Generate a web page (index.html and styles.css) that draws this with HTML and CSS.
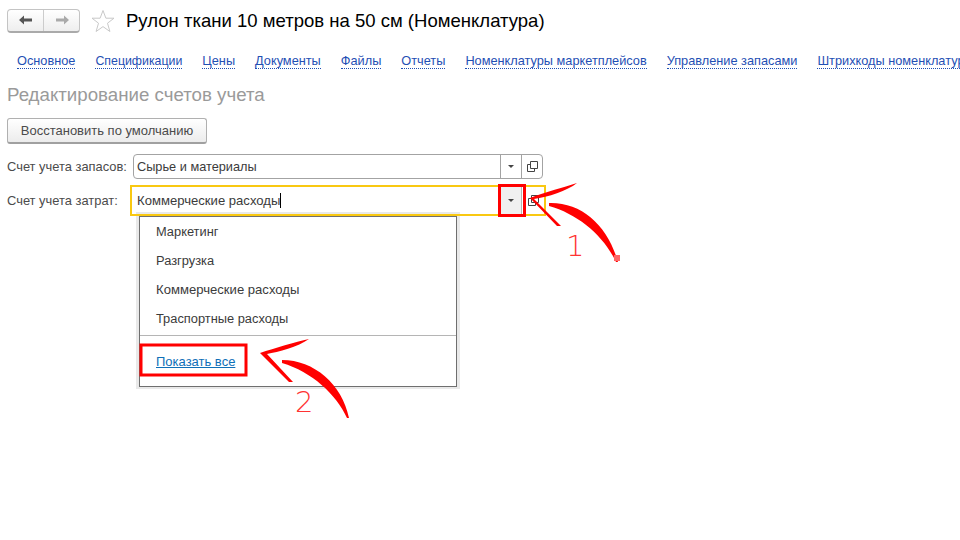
FILE: index.html
```html
<!DOCTYPE html>
<html lang="ru">
<head>
<meta charset="utf-8">
<title>Рулон ткани</title>
<link rel="stylesheet" href="styles.css">
</head>
<body>
<div class="page">
  <header class="head">
    <div class="navbtns">
      <span class="navbtn"><svg width="16" height="12" viewBox="0 0 16 12"><path d="M1 6 L6 1.5 V4.6 H14 V7.4 H6 V10.5 Z" fill="#555"/></svg></span>
      <span class="navbtn"><svg width="16" height="12" viewBox="0 0 16 12"><path d="M15 6 L10 1.5 V4.6 H2 V7.4 H10 V10.5 Z" fill="#aaa"/></svg></span>
    </div>
    <svg class="star" width="24" height="24" viewBox="0 0 24 24"><path d="M12 1.5 L14.9 9.2 H23 L16.5 14.2 L18.9 22.5 L12 17.6 L5.1 22.5 L7.5 14.2 L1 9.2 H9.1 Z" fill="none" stroke="#c9c9c9"/></svg>
    <h1 class="title">Рулон ткани 10 метров на 50 см (Номенклатура)</h1>
  </header>
  <nav class="tabs">
    <a class="tab">Основное</a>
    <a class="tab tab-tight">Спецификации</a>
    <a class="tab">Цены</a>
    <a class="tab">Документы</a>
    <a class="tab">Файлы</a>
    <a class="tab">Отчеты</a>
    <a class="tab">Номенклатуры маркетплейсов</a>
    <a class="tab">Управление запасами</a>
    <a class="tab">Штрихкоды номенклатуры</a>
  </nav>
  <h2 class="subtitle">Редактирование счетов учета</h2>
  <button class="reset">Восстановить по умолчанию</button>
  <div class="row row-first">
    <label class="lbl">Счет учета запасов:</label>
    <div class="field">
      <span class="value">Сырье и материалы</span>
      <span class="cell"><i class="caret"></i></span>
      <span class="cell"><svg width="11" height="11" viewBox="0 0 11 11"><path d="M3.5 .5 H10.5 V7.5 H3.5 Z M3.5 3.5 H.5 V10.5 H7.5 V7.5" fill="none" stroke="#444"/></svg></span>
    </div>
  </div>
  <div class="row row-second">
    <label class="lbl">Счет учета затрат:</label>
    <div class="field-active">
      <span class="value value-active wide">Коммерческие расходы<span class="cursor"></span></span>
      <span class="cell-active"><i class="caret"></i></span>
      <span class="cell-open"><svg width="11" height="11" viewBox="0 0 11 11"><path d="M3.5 .5 H10.5 V7.5 H3.5 Z M3.5 3.5 H.5 V10.5 H7.5 V7.5" fill="none" stroke="#444"/></svg></span>
    </div>
  </div>
  <div class="dropdown">
    <ul class="items">
      <li class="item">Маркетинг</li>
      <li class="item">Разгрузка</li>
      <li class="item wide">Коммерческие расходы</li>
      <li class="item">Траспортные расходы</li>
    </ul>
    <div class="more"><a class="showall">Показать все</a></div>
  </div>
</div>
<svg class="marks" width="960" height="540" viewBox="0 0 960 540">
  <rect x="499.5" y="185.5" width="25" height="30" fill="none" stroke="#f00" stroke-width="3"/>
  <rect x="141" y="345" width="105" height="30" fill="none" stroke="#f00" stroke-width="3"/>
  <path d="M530 198 C545 192 565 187 577 183 C567 191 548 197 534 199 L561 226 L557 226 Z" fill="#f00"/>
  <path d="M549 203 C582 202 608 226 618 262 L616 262 C604 236 578 214 549 206 Z" fill="#f00"/>
  <rect x="614" y="255" width="6" height="6" fill="#f66"/>
  <path d="M260 353 C275 348 295 342 309 339 C298 347 278 352 267 354 L293 382 L289 382 Z" fill="#f00"/>
  <path d="M282 360 C314 360 342 384 349 418 L347 418 C336 394 312 372 282 363 Z" fill="#f00"/>
  <text class="num" x="566" y="256">1</text>
  <text class="num" x="295" y="412">2</text>
</svg>
</body>
</html>
```
FILE: styles.css
```css
html, body { margin: 0; padding: 0; background: #fff; }
body { width: 960px; height: 540px; overflow: hidden; font-family: "Liberation Sans", Arial, sans-serif; font-size: 12px; color: #4b4b4b; position: relative; }
.page { padding: 8px 0 0 7px; }
.head { display: flex; align-items: center; height: 25px; }
.navbtns { display: flex; width: 73px; height: 24px; box-sizing: border-box; border: 1px solid #c4c4c4; border-bottom: 2px solid #aaa; border-radius: 4px; background: linear-gradient(#fff, #eee); }
.navbtn { flex: 1; display: flex; align-items: center; justify-content: center; }
.navbtn + .navbtn { border-left: 1px solid #ccc; }
.star { margin-left: 11px; }
.title { margin: 1px 0 0 11px; font-size: 18.55px; font-weight: 400; color: #000; white-space: nowrap; }
.tabs { display: flex; gap: 20px; margin: 21px 0 0 10px; white-space: nowrap; font-size: 12.75px; }
.tab { color: #1f4fb4; border-bottom: 1px dotted #1f4fb4; line-height: 14px; }
.tab-tight { font-size: 12.35px; }
.subtitle { margin: 16px 0 0; font-size: 18.7px; font-weight: 400; color: #9a9a9a; line-height: 20px; }
.reset { display: block; margin: 13px 0 0; width: 200px; height: 26px; padding: 0; border: 1px solid #b0b0b0; border-bottom: 2px solid #a0a0a0; border-radius: 3px; background: linear-gradient(#fff, #ececec); font: 13px "Liberation Sans", Arial, sans-serif; color: #4b4b4b; }
.row { display: flex; align-items: center; }
.row-first { margin-top: 10px; height: 25px; }
.row-second { margin-top: 6px; height: 31px; }
.lbl { white-space: nowrap; font-size: 12.9px; }
.row-first .lbl { width: 126px; }
.row-second .lbl { width: 123px; }
.field { display: flex; width: 410px; height: 25px; box-sizing: border-box; border: 1px solid #a3a3a3; border-radius: 4px; }
.value { flex: 1; padding-left: 3px; line-height: 23px; font-size: 12.75px; color: #3b3b3b; }
.cell { width: 21px; box-sizing: border-box; display: flex; align-items: center; justify-content: center; border-left: 1px solid #a3a3a3; }
.field-active { display: flex; width: 416px; height: 31px; box-sizing: border-box; border: 2px solid #f9c811; }
.value-active { padding-left: 5px; line-height: 27px; }
.cursor { display: inline-block; width: 1px; height: 15px; background: #000; vertical-align: -3px; }
.cell-active { width: 22px; box-sizing: border-box; border-right: 1px solid #b5b5b5; background: #f0f0f0; display: flex; align-items: center; justify-content: center; }
.cell-open { width: 22px; display: flex; align-items: center; justify-content: center; }
.caret { display: block; width: 0; height: 0; border-left: 3px solid transparent; border-right: 3px solid transparent; border-top: 3px solid #444; }
.dropdown { margin: 0 0 0 132px; width: 318px; height: 171px; box-sizing: border-box; border: 1px solid #6f6f6f; background: #fff; box-shadow: 0 -1px 0 3px #e9e9e9; }
.items { list-style: none; margin: 0; padding: 0 0 2px; border-bottom: 1px solid #b5b5b5; }
.item { height: 29px; line-height: 29px; padding-left: 16px; font-size: 12.85px; color: #3b3b3b; }
.item.wide, .value.wide { font-size: 13.1px; }
.more { padding: 18px 0 0 16px; font-size: 13px; }
.showall { color: #0f6fb8; text-decoration: underline; }
.marks { position: absolute; left: 0; top: 0; pointer-events: none; }
.num { font-family: "DejaVu Sans", sans-serif; font-size: 29px; font-weight: 200; fill: #f33; }
```
